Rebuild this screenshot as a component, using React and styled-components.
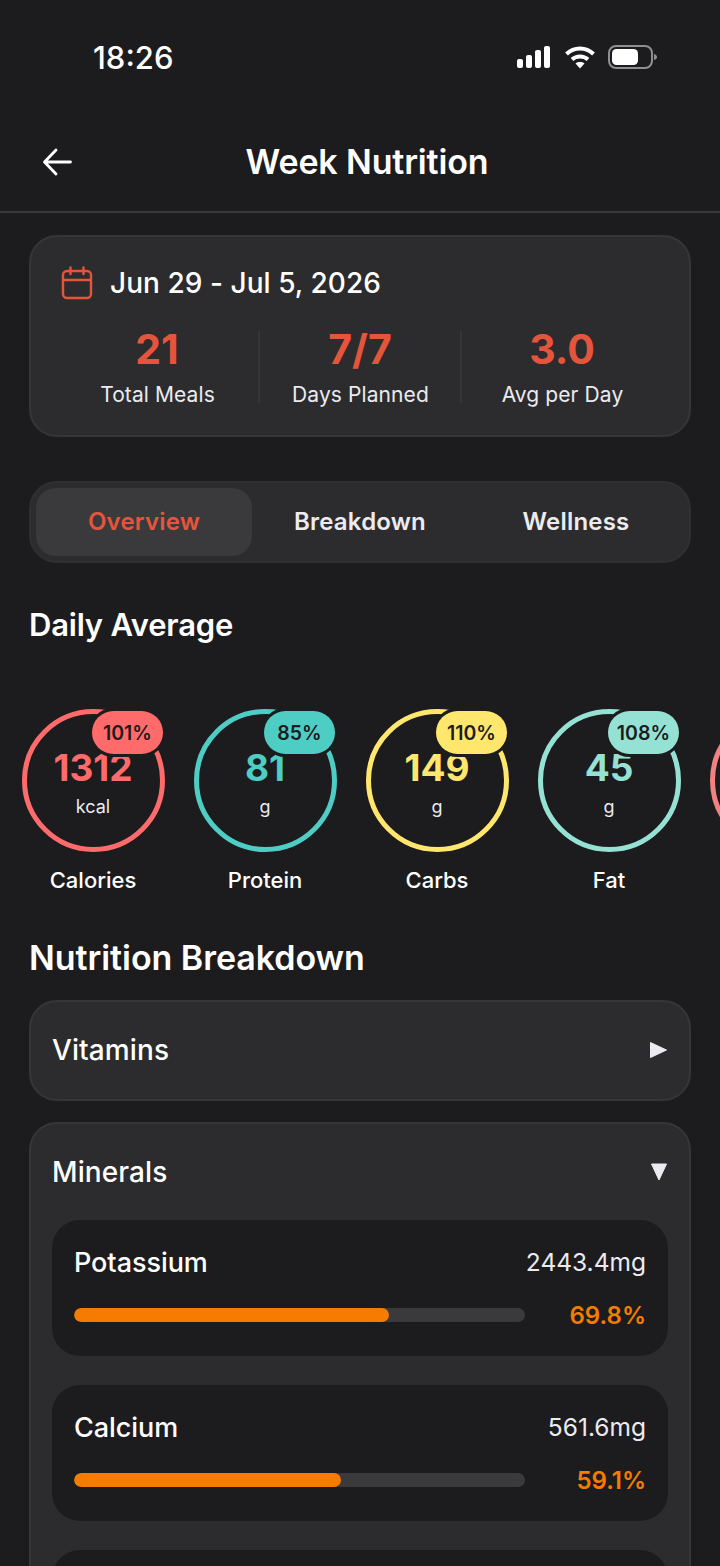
import React from "react";
import styled, { createGlobalStyle } from "styled-components";

const Global = createGlobalStyle`
  html, body { margin: 0; padding: 0; background: #1c1c1e; }
  body { font-family: Inter, "Noto Sans", sans-serif; -webkit-font-smoothing: antialiased; }
  * { box-sizing: border-box; }
`;

const Page = styled.div`
  width: 720px; height: 1566px; overflow: hidden; background: #1c1c1e; color: #fff;
`;
const StatusBar = styled.div`
  height: 116px; padding: 36px 62px 0 93px; display: flex; justify-content: space-between; align-items: flex-start;
`;
const Time = styled.div`
  font-size: 31px; line-height: 44px; font-weight: 500;
`;
const StatusIcons = styled.div`
  display: flex; align-items: center; gap: 13px; height: 42px;
`;
const Header = styled.header`
  height: 97px; border-bottom: 2px solid #38383a; display: grid; grid-template-columns: 1fr auto 1fr;
  align-items: center; padding: 0 26px 4px 40px;
`;
const BackButton = styled.div`
  display: flex; align-items: center; height: 34px;
`;
const Title = styled.h1`
  margin: 0; font-size: 34px; line-height: 44px; font-weight: 600; letter-spacing: -0.15px;
`;
const Content = styled.main`
  padding: 22px 29px 0;
`;
const SummaryCard = styled.section`
  height: 202px; background: #2c2c2e; border: 2px solid #363638; border-radius: 28px; padding: 24px 30px 0;
`;
const DateRow = styled.div`
  display: flex; align-items: center; gap: 17px; height: 44px;
`;
const DateText = styled.div`
  font-size: 28px; line-height: 40px; font-weight: 500; letter-spacing: 0.05px;
`;
const Stats = styled.div`
  display: grid; grid-template-columns: repeat(3, 1fr); margin: 26px 0 0 -5px; width: 606px;
`;
const Stat = styled.div`
  display: flex; flex-direction: column; align-items: center; height: 72px;
  border-left: ${p => (p.$divider ? "2px solid #363638" : "none")};
`;
const StatValue = styled.div`
  font-size: 41px; line-height: 52px; font-weight: 700; color: #e5553b; margin-top: -8px;
`;
const StatLabel = styled.div`
  font-size: 21px; line-height: 28px; letter-spacing: 0.1px; color: #ebebf0; margin-top: 6px; margin-left: 1px;
`;
const Tabs = styled.nav`
  margin-top: 44px; height: 82px; background: #2c2c2e; border: 2px solid #303032; border-radius: 28px;
  display: grid; grid-template-columns: repeat(3, 1fr); padding: 5px;
`;
const Tab = styled.div`
  display: flex; align-items: center; justify-content: center; border-radius: 20px;
  font-size: 24px; font-weight: 600; letter-spacing: 0.2px; padding-bottom: 2px;
  color: ${p => (p.$active ? "#e5553b" : "#ebebf0")};
  background: ${p => (p.$active ? "#3a3a3c" : "transparent")};
`;
const SectionTitle = styled.h2`
  margin: 0; font-weight: 600; font-size: ${p => p.$size}px; line-height: 44px;
`;
const DailyTitle = styled(SectionTitle)`
  margin: 40px 0 0 0; letter-spacing: -0.2px;
`;
const BreakdownTitle = styled(SectionTitle)`
  margin: 0 0 20px 0; letter-spacing: -0.05px;
`;
const RingScroller = styled.div`
  display: flex; gap: 29px; margin: 62px -29px 0; padding-left: 21.5px; overflow: hidden; height: 227px;
`;
const RingItem = styled.div`
  flex: 0 0 143px; display: flex; flex-direction: column; align-items: center;
`;
const RingBox = styled.div`
  position: relative; width: 143px; height: 144px;
`;
const Ring = styled.div`
  width: 143px; height: 143px; border-radius: 50%; border: 5px solid ${p => p.$color};
  display: flex; flex-direction: column; align-items: center; padding-top: 33px;
`;
const RingValue = styled.div`
  font-size: 37px; line-height: 42px; font-weight: 700; color: ${p => p.$color};
`;
const RingUnit = styled.div`
  font-size: 18px; line-height: 24px; color: #ebebf0; margin-top: 6px;
`;
const Badge = styled.div`
  position: absolute; top: 2px; right: 1.5px; min-width: 71px; height: 43px; padding: 0 9px; border-radius: 22px;
  display: flex; align-items: center; justify-content: center;
  background: ${p => p.$color}; color: #1c1c1e; font-size: 19.5px; font-weight: 600;
  box-shadow: 0 0 0 3px #1c1c1e;
`;
const RingLabel = styled.div`
  margin-top: 13px; font-size: 22px; line-height: 28px; font-weight: 500;
`;
const Accordion = styled.section`
  background: #2c2c2e; border: 2px solid #363638; border-radius: 28px;
  margin-bottom: 21px; padding: 0 21px;
`;
const AccordionHead = styled.div`
  height: ${p => p.$h}px; padding-bottom: ${p => p.$pb || 0}px; display: flex; align-items: center; justify-content: space-between;
`;
const AccordionTitle = styled.div`
  font-size: 28px; font-weight: 500; letter-spacing: 0.1px;
`;
const NutrientCard = styled.div`
  background: #1c1c1e; border-radius: 28px; height: 136px; padding: 23px 22px 0; margin-bottom: 29px;
`;
const NutrientTop = styled.div`
  display: flex; justify-content: space-between; align-items: center; height: 38px;
`;
const NutrientName = styled.div`
  font-size: 27px; font-weight: 500; letter-spacing: -0.05px;
`;
const NutrientAmount = styled.div`
  font-size: 24.5px; color: #ebebf0;
`;
const NutrientBottom = styled.div`
  display: flex; justify-content: space-between; align-items: center; margin-top: 20px; height: 28px;
`;
const Track = styled.div`
  width: 451px; height: 14px; border-radius: 7px; background: #3a3a3c; overflow: hidden;
`;
const Fill = styled.div`
  height: 100%; border-radius: 7px; background: #f57c00;
`;
const Percent = styled.div`
  font-size: 24px; font-weight: 600; color: #f57c00;
`;

const SignalIcon = () => (
  <svg width="36" height="24" viewBox="0 0 36 24" fill="#fff">
    <rect x="1" y="14" width="6" height="9" rx="2" />
    <rect x="10" y="10" width="6" height="13" rx="2" />
    <rect x="19" y="5" width="6" height="18" rx="2" />
    <rect x="28" y="1" width="6" height="22" rx="2" />
  </svg>
);
const WifiIcon = () => (
  <svg width="30" height="24" viewBox="0 0 30 24" fill="none" stroke="#fff" strokeWidth="4">
    <path d="M1.5 9 C9 1.5 21 1.5 28.5 9" />
    <path d="M7 14.5 C11.5 10.5 18.5 10.5 23 14.5" />
    <path d="M15 23.5 L10.5 18.5 C13 16.6 17 16.6 19.5 18.5 Z" fill="#fff" stroke="none" />
  </svg>
);
const BatteryIcon = () => (
  <svg width="50" height="24" viewBox="0 0 50 24" fill="none">
    <rect x="1" y="1" width="43" height="22" rx="7" stroke="#8e8e93" strokeWidth="2" />
    <rect x="4" y="4" width="26" height="16" rx="4.5" fill="#fff" />
    <path d="M46 9 C48 9.5 49 10.5 49 12 C49 13.5 48 14.5 46 15 Z" fill="#8e8e93" />
  </svg>
);
const BackIcon = () => (
  <svg width="34" height="32" viewBox="0 0 34 32" fill="none" stroke="#fff" strokeWidth="2.8" strokeLinecap="round" strokeLinejoin="round">
    <path d="M30.5 16 H5 M16 4 L4.5 16 L16 28" />
  </svg>
);
const CalendarIcon = () => (
  <svg width="32" height="34" viewBox="0 0 32 34" fill="none" stroke="#e5553b" strokeWidth="2.4" strokeLinecap="round" strokeLinejoin="round">
    <rect x="2" y="5" width="28" height="27" rx="4" />
    <path d="M2 14 H30 M9.5 1.5 V8 M22.5 1.5 V8" />
  </svg>
);
const TriangleRight = () => (
  <svg width="18" height="18" viewBox="0 0 18 18" fill="#ebebf0" stroke="#ebebf0" strokeWidth="1" strokeLinejoin="round">
    <path d="M0.5 1.5 L16.5 9 L0.5 16.5 Z" />
  </svg>
);
const TriangleDown = () => (
  <svg width="18" height="18" viewBox="0 0 18 18" fill="#ebebf0" stroke="#ebebf0" strokeWidth="1" strokeLinejoin="round">
    <path d="M1.5 1 H16.5 L9 17 Z" />
  </svg>
);

const rings = [
  { label: "Calories", value: "1312", unit: "kcal", pct: "101%", color: "#ff6b6b" },
  { label: "Protein", value: "81", unit: "g", pct: "85%", color: "#4ecdc4" },
  { label: "Carbs", value: "149", unit: "g", pct: "110%", color: "#ffe66d" },
  { label: "Fat", value: "45", unit: "g", pct: "108%", color: "#95e1d3" },
];
const nutrients = [
  { name: "Potassium", amount: "2443.4mg", pct: 69.8 },
  { name: "Calcium", amount: "561.6mg", pct: 59.1 },
];

export default function App() {
  return (
    <Page>
      <Global />
      <StatusBar>
        <Time>18:26</Time>
        <StatusIcons><SignalIcon /><WifiIcon /><BatteryIcon /></StatusIcons>
      </StatusBar>
      <Header>
        <BackButton><BackIcon /></BackButton>
        <Title>Week Nutrition</Title>
      </Header>
      <Content>
        <SummaryCard>
          <DateRow><CalendarIcon /><DateText>Jun 29 - Jul 5, 2026</DateText></DateRow>
          <Stats>
            <Stat><StatValue>21</StatValue><StatLabel>Total Meals</StatLabel></Stat>
            <Stat $divider><StatValue>7/7</StatValue><StatLabel>Days Planned</StatLabel></Stat>
            <Stat $divider><StatValue>3.0</StatValue><StatLabel>Avg per Day</StatLabel></Stat>
          </Stats>
        </SummaryCard>
        <Tabs>
          <Tab $active>Overview</Tab>
          <Tab>Breakdown</Tab>
          <Tab>Wellness</Tab>
        </Tabs>
        <DailyTitle $size={31}>Daily Average</DailyTitle>
        <RingScroller>
          {rings.map(r => (
            <RingItem key={r.label}>
              <RingBox>
                <Ring $color={r.color}>
                  <RingValue $color={r.color}>{r.value}</RingValue>
                  <RingUnit>{r.unit}</RingUnit>
                </Ring>
                <Badge $color={r.color}>{r.pct}</Badge>
              </RingBox>
              <RingLabel>{r.label}</RingLabel>
            </RingItem>
          ))}
          <RingItem><RingBox><Ring $color="#f38181" /></RingBox></RingItem>
        </RingScroller>
        <BreakdownTitle $size={34}>Nutrition Breakdown</BreakdownTitle>
        <Accordion>
          <AccordionHead $h={97} $pb={1}><AccordionTitle>Vitamins</AccordionTitle><TriangleRight /></AccordionHead>
        </Accordion>
        <Accordion $open>
          <AccordionHead $h={96}><AccordionTitle>Minerals</AccordionTitle><TriangleDown /></AccordionHead>
          {nutrients.map(n => (
            <NutrientCard key={n.name}>
              <NutrientTop><NutrientName>{n.name}</NutrientName><NutrientAmount>{n.amount}</NutrientAmount></NutrientTop>
              <NutrientBottom>
                <Track><Fill style={{ width: `${n.pct}%` }} /></Track>
                <Percent>{n.pct}%</Percent>
              </NutrientBottom>
            </NutrientCard>
          ))}
          <NutrientCard />
        </Accordion>
      </Content>
    </Page>
  );
}
